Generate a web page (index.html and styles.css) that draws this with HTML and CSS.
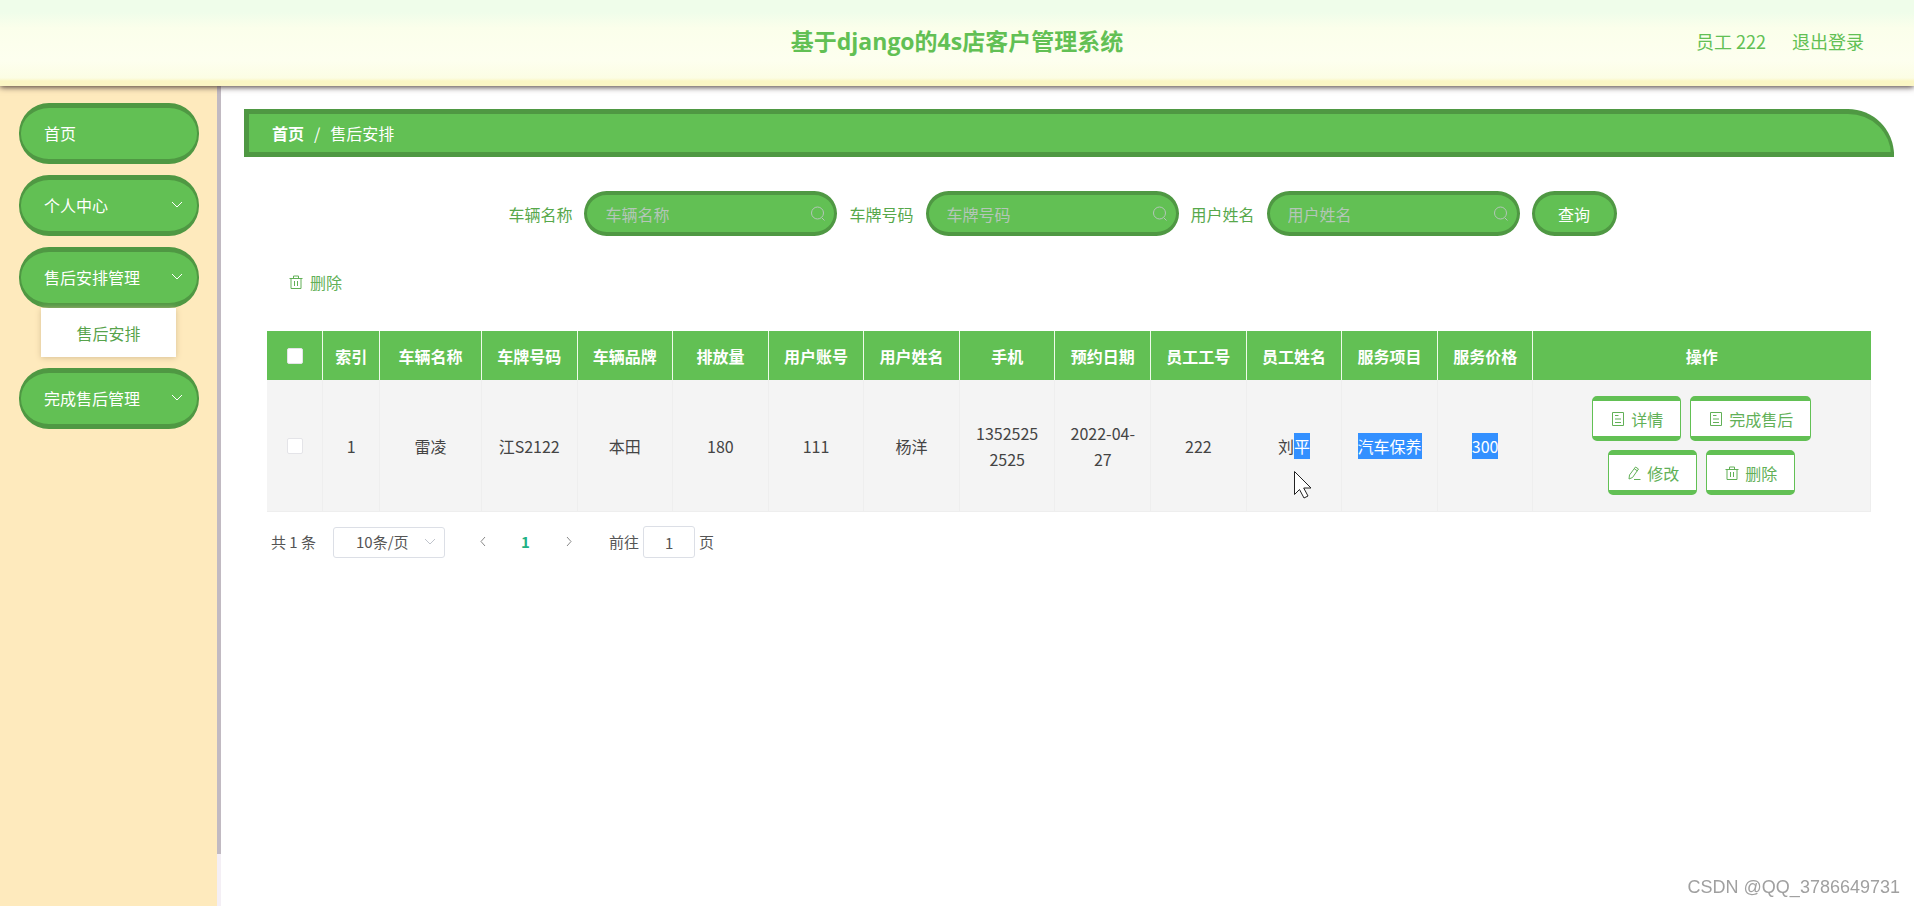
FILE: index.html
```html
<!DOCTYPE html>
<html lang="zh-CN">
<head>
<meta charset="utf-8">
<title>基于django的4s店客户管理系统</title>
<link rel="stylesheet" href="styles.css">
</head>
<body>
<svg class="sprite" aria-hidden="true">
  <symbol id="i-down" viewBox="0 0 14 14"><path d="M2 4l5 5 5-5"/></symbol>
  <symbol id="i-left" viewBox="0 0 14 14"><path d="M9 2l-4 4.500 4 4.500"/></symbol>
  <symbol id="i-right" viewBox="0 0 14 14"><path d="M5 2l4 4.500-4 4.500"/></symbol>
  <symbol id="i-search" viewBox="0 0 16 16"><circle cx="7.500" cy="7" r="6"/><path d="M12 12l2.500 2.500"/></symbol>
  <symbol id="i-trash" viewBox="0 0 14 14"><path d="M.5 3.500h13M4.500 3.500v-2.500h5v2.500M2 3.500v10h10v-10M5.500 6v5M8.500 6v5"/></symbol>
  <symbol id="i-doc" viewBox="0 0 14 14"><path d="M1.500.5h11v13h-11zM4 3.500h3.500M4 7h6M4 10.500h6"/></symbol>
  <symbol id="i-edit" viewBox="0 0 14 14"><path d="M8.500 1l3 2-6 8.500-3.500 1.500.5-4zM7.300 2.800l3 2M7 13.500h6.500"/></symbol>
</svg>
<header class="topbar">
  <h1 class="brand">基于django的4s店客户管理系统</h1>
  <div class="account">
    <span>员工 222</span>
    <a href="#">退出登录</a>
  </div>
</header>
<div class="body">
  <aside class="sidebar">
    <nav class="menu">
      <a class="item" href="#">首页</a>
      <button class="item" type="button">个人中心<svg class="icon"><use href="#i-down"/></svg></button>
      <div class="group">
        <button class="item" type="button">售后安排管理<svg class="icon"><use href="#i-down"/></svg></button>
        <a class="subitem" href="#">售后安排</a>
      </div>
      <button class="item" type="button">完成售后管理<svg class="icon"><use href="#i-down"/></svg></button>
    </nav>
    <div class="track"><div class="thumb"></div></div>
  </aside>
  <main class="content">
    <nav class="crumbs">
      <a href="#">首页</a><span class="slash">/</span><span>售后安排</span>
    </nav>
    <form class="search">
      <label for="car">车辆名称</label>
      <div class="field"><input id="car" type="text" placeholder="车辆名称"><svg class="icon"><use href="#i-search"/></svg></div>
      <label for="plate">车牌号码</label>
      <div class="field"><input id="plate" type="text" placeholder="车牌号码"><svg class="icon"><use href="#i-search"/></svg></div>
      <label for="user">用户姓名</label>
      <div class="field"><input id="user" type="text" placeholder="用户姓名"><svg class="icon"><use href="#i-search"/></svg></div>
      <button class="query" type="button">查询</button>
    </form>
    <div class="panel">
      <button class="bulk" type="button"><svg class="icon"><use href="#i-trash"/></svg>删除</button>
      <table class="grid">
        <colgroup>
          <col class="c-check"><col class="c-index"><col class="c-name">
          <col class="c-data" span="11"><col>
        </colgroup>
        <thead>
          <tr>
            <th><input type="checkbox" aria-label="全选"></th>
            <th>索引</th><th>车辆名称</th><th>车牌号码</th><th>车辆品牌</th><th>排放量</th><th>用户账号</th><th>用户姓名</th><th>手机</th><th>预约日期</th><th>员工工号</th><th>员工姓名</th><th>服务项目</th><th>服务价格</th><th>操作</th>
          </tr>
        </thead>
        <tbody>
          <tr>
            <td><input type="checkbox" aria-label="选择第1行"></td>
            <td>1</td><td>雷凌</td><td>江S2122</td><td>本田</td><td>180</td><td>111</td><td>杨洋</td><td>13525252525</td><td>2022-04-27</td><td>222</td>
            <td class="pointed">刘<mark>平</mark>
              <svg class="cursor" viewBox="0 0 20 30"><path d="M1.500 1.500v23l5-5 4.500 8.500 4-2-4.300-8h7.300z"/></svg>
            </td>
            <td><mark>汽车保养</mark></td><td><mark>300</mark></td>
            <td>
              <div class="actions">
                <button type="button"><svg class="icon"><use href="#i-doc"/></svg>详情</button>
                <button type="button"><svg class="icon"><use href="#i-doc"/></svg>完成售后</button>
                <button type="button"><svg class="icon"><use href="#i-edit"/></svg>修改</button>
                <button type="button"><svg class="icon"><use href="#i-trash"/></svg>删除</button>
              </div>
            </td>
          </tr>
        </tbody>
      </table>
      <div class="pager">
        <span>共 1 条</span>
        <div class="size">
          <select aria-label="每页条数"><option>10条/页</option></select>
          <svg class="icon"><use href="#i-down"/></svg>
        </div>
        <div class="pages">
          <button type="button" aria-label="上一页"><svg class="icon"><use href="#i-left"/></svg></button>
          <button class="current" type="button">1</button>
          <button type="button" aria-label="下一页"><svg class="icon"><use href="#i-right"/></svg></button>
        </div>
        <div class="jump"><label for="page">前往</label><input id="page" type="text" value="1"><span>页</span></div>
      </div>
    </div>
  </main>
</div>
<div class="watermark">CSDN @QQ_3786649731</div>
</body>
</html>
```

FILE: styles.css
```css
* { box-sizing: border-box; }

:root {
  --green: #62c054;
  --edge: #4f9843;
}

body {
  margin: 0;
  min-height: 100vh;
  display: flex;
  flex-direction: column;
  background: #fff;
  color: #444;
  font-family: "Noto Sans CJK SC", sans-serif;
  font-size: 16px;
  line-height: 26px;
}

button, input, select { font: inherit; color: inherit; margin: 0; }
button { cursor: pointer; }
a { color: inherit; text-decoration: none; }

.sprite { display: none; }
.icon {
  width: 14px;
  height: 14px;
  flex: none;
  fill: none;
  stroke: currentColor;
  stroke-width: 1;
}

.topbar {
  position: relative;
  z-index: 1;
  display: grid;
  grid-template-columns: 1fr auto 1fr;
  align-items: center;
  height: 86px;
  padding: 0 50px 4px;
  color: var(--green);
  background: linear-gradient(#effdea 0, #effdea 12px, #fbffeb 28px, #fdffef 60px, #fcfde4 78px, #fbf6c4 81px, #fbf6c4 100%);
  box-shadow: 0 1px 6px #403030;
}
.brand {
  grid-column: 2;
  margin: 0;
  font: 700 23px/32px "Open Sans", "Noto Sans CJK SC", sans-serif;
}
.account {
  display: flex;
  justify-content: flex-end;
  gap: 26px;
  font-size: 18px;
}

.body { flex: 1; display: flex; }

.sidebar {
  width: 221px;
  flex: none;
  display: flex;
  background: #feeabd;
}
.menu {
  flex: 1;
  display: flex;
  flex-direction: column;
  gap: 11px;
  padding: 17px 18px 0 19px;
}
.item {
  display: flex;
  align-items: center;
  justify-content: space-between;
  width: 100%;
  height: 61px;
  padding: 0 13px 2px 23px;
  border: solid var(--edge);
  border-width: 5px 2px;
  border-radius: 30px;
  background: var(--green);
  color: #fff;
}
.subitem {
  display: block;
  margin: 0 23px 0 22px;
  padding: 12px 0 11px;
  background: #fff;
  color: #57a34b;
  text-align: center;
  box-shadow: 0 1px 6px #d8c096;
}
.track { width: 4px; background: #f4eff5; }
.thumb { height: calc(100% - 52px); background: #c1bac2; }

.content {
  flex: 1;
  min-width: 0;
  padding: 23px 20px 0 23px;
}
.crumbs {
  display: flex;
  align-items: center;
  height: 48px;
  padding: 0 23px;
  border: solid var(--edge);
  border-width: 5px 3px 5px 5px;
  border-radius: 0 46px 0 0;
  background: var(--green);
  color: #fff;
}
.crumbs a { font-weight: 700; }
.slash { margin: 0 10px; }

.search {
  display: flex;
  align-items: center;
  justify-content: center;
  gap: 12px;
  margin-top: 34px;
  padding-right: 13px;
  color: #57a84b;
}
.field, .query {
  height: 45px;
  border: solid var(--edge);
  border-width: 4px 3px;
  border-radius: 23px;
  background: var(--green);
}
.field {
  display: flex;
  align-items: center;
  width: 253px;
  padding: 0 8px 0 18px;
  color: #b4c6b8;
}
.field input {
  flex: 1;
  min-width: 0;
  padding: 0;
  border: 0;
  outline: 0;
  background: none;
}
.field input::placeholder { color: #b4c6b8; opacity: 1; }
.field .icon { width: 16px; height: 16px; }
.query { width: 85px; padding: 0; color: #fff; }

.panel { padding: 0 23px; margin-top: 33px; }
.bulk {
  display: flex;
  align-items: center;
  gap: 7px;
  margin-bottom: 36px;
  padding: 0 22px;
  border: 0;
  background: none;
  color: #62b057;
}

.grid {
  width: 100%;
  table-layout: fixed;
  border-collapse: separate;
  border-spacing: 0;
  text-align: center;
}
.c-check, .c-index { width: 3.52%; }
.c-name { width: 6.36%; }
.c-data { width: 5.96%; }
.grid th {
  height: 49px;
  padding: 0;
  border-right: 1px solid #eefbe9;
  background: var(--green);
  color: #fff;
}
.grid th:last-child { border-right-color: var(--green); }
.grid td {
  height: 132px;
  padding: 0 12px;
  border: solid #eee;
  border-width: 0 1px 1px 0;
  background: #f4f4f4;
  overflow-wrap: anywhere;
}
.grid td:nth-child(9) { padding: 0 14px; }
.grid input {
  appearance: none;
  display: block;
  width: 16px;
  height: 16px;
  margin: 0 auto;
  border: 1px solid #e4e4e8;
  border-radius: 2px;
  background: #fff;
}
mark { display: inline-block; background: #3390ff; color: #fff; }
.pointed { position: relative; }
.cursor {
  position: absolute;
  top: 90px;
  left: 46px;
  width: 20px;
  height: 30px;
  fill: #fff;
  stroke: #222;
}

.actions {
  display: flex;
  flex-wrap: wrap;
  justify-content: center;
  gap: 9px;
  padding: 0 30px;
}
.actions button {
  display: flex;
  align-items: center;
  gap: 6px;
  height: 45px;
  padding: 0 17px 0 18px;
  border: solid var(--green);
  border-width: 5px 1px;
  border-radius: 5px;
  background: #fff;
  color: #62b057;
}

.pager {
  display: flex;
  align-items: center;
  padding: 14px 4px;
  font-size: 15px;
  color: #555;
}
.size {
  display: flex;
  align-items: center;
  width: 112px;
  height: 31px;
  margin: 0 20px 0 17px;
  border: 1px solid #dcdfe6;
  border-radius: 3px;
  color: #c0c4cc;
}
.size select {
  appearance: none;
  flex: 1;
  width: 80px;
  height: 100%;
  padding: 0 0 0 22px;
  border: 0;
  background: none;
  color: #555;
}
.size .icon { margin-right: 7px; }
.pages { display: flex; }
.pages button {
  display: flex;
  align-items: center;
  justify-content: center;
  width: 43px;
  padding: 0 8px 0 0;
  border: 0;
  background: none;
  color: #888;
}
.pages .current { color: #1fb184; font-weight: 700; }
.jump {
  display: flex;
  align-items: center;
  gap: 4px;
  margin-left: 15px;
}
.jump input {
  width: 52px;
  height: 32px;
  padding: 0;
  border: 1px solid #dcdfe6;
  border-radius: 3px;
  text-align: center;
}

.watermark {
  position: fixed;
  right: 14px;
  bottom: 6px;
  color: #a0a0a0;
  font: 18px/26px "Liberation Sans", sans-serif;
  text-shadow: 1px 1px #fff;
}
```
